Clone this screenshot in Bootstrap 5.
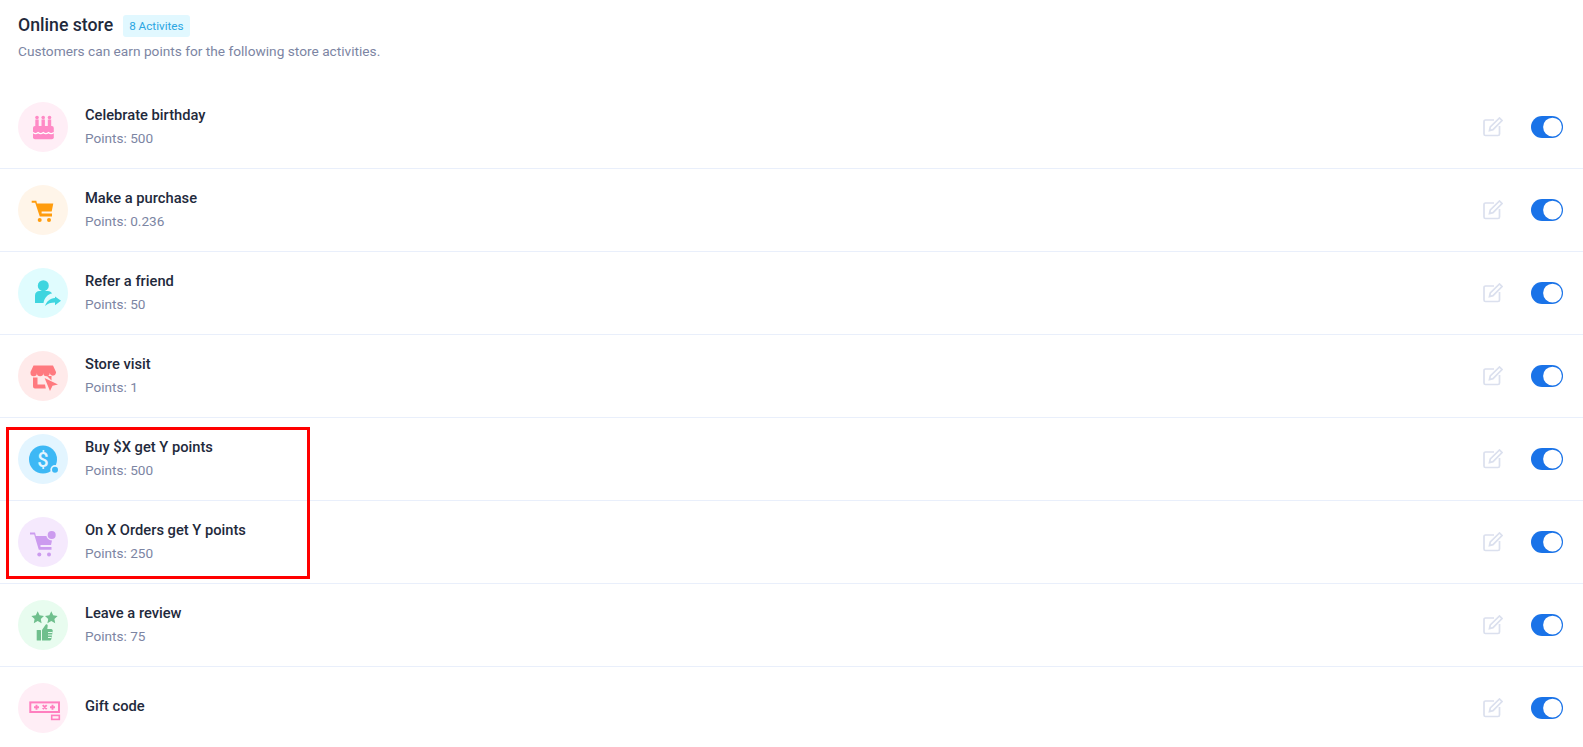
<!DOCTYPE html>
<html lang="en">
<head>
    <meta charset="UTF-8">
    <meta name="viewport" content="width=device-width, initial-scale=1.0">
    <title>Online store activities</title>
    <link href="https://cdn.jsdelivr.net/npm/bootstrap@5.3.0/dist/css/bootstrap.min.css" rel="stylesheet">
    <style>
        body {
            font-family: Roboto, "Liberation Sans", sans-serif;
            background: #fff;
            color: #1f2a3c;
        }
        .store-head {
            padding: 13px 20px 0 18px;
            height: 86px;
        }
        .store-title {
            font-size: 17.7px;
            font-weight: 500;
            line-height: 24px;
            margin: 0;
        }
        .count-tag {
            background: #e1f8ff;
            color: #2ba6e2;
            font-size: 11.7px;
            line-height: 22px;
            padding: 0 6px;
            border-radius: 3px;
            margin-left: 10px;
            margin-top: 2px;
        }
        .store-sub {
            font-size: 13.7px;
            line-height: 20px;
            color: #7c85a3;
            margin: 4px 0 0;
        }
        .activity-row {
            padding: 16px 20px 16px 18px;
            border-bottom: 1px solid #e9effb;
        }
        .activity-row:last-child {
            border-bottom: 0;
            padding-bottom: 0;
        }
        .icon-disc {
            width: 50px;
            height: 50px;
            flex: none;
            margin-right: 17px;
        }
        .icon-disc svg {
            width: 32px;
            height: 32px;
            overflow: visible;
        }
        .disc-pink { background: #ffeef6; }
        .disc-orange { background: #fff5e9; }
        .disc-cyan { background: #e0fcfe; }
        .disc-red { background: #ffeaea; }
        .disc-blue { background: #e3f5ff; }
        .disc-purple { background: #f5e9fd; }
        .disc-green { background: #e8fcef; }
        .activity-name {
            font-size: 14.7px;
            font-weight: 500;
            line-height: 20px;
            margin: 0;
        }
        .activity-name.name-only {
            padding-bottom: 4px;
        }
        .activity-points {
            font-size: 13.6px;
            line-height: 20px;
            color: #7c85a3;
            margin: 3px 0 1px;
        }
        .edit-icon {
            width: 20px;
            height: 20px;
            margin-right: 28px;
        }
        .form-switch.switch-box {
            padding: 0;
            margin: 0;
            min-height: 0;
            line-height: 0;
        }
        .form-switch.switch-box .form-check-input {
            float: none;
            width: 32px;
            height: 22px;
            margin: 0;
            border: 0;
            background-color: #1a73e8;
            background-size: 25px 25px;
            background-position: right -2px center;
        }
        .marked-rows {
            position: relative;
        }
        .marked-frame {
            position: absolute;
            left: 6px;
            top: 9px;
            width: 304px;
            height: 152px;
            border: 3px solid #f00;
            pointer-events: none;
        }
    </style>
</head>
<body>
    <svg class="d-none">
        <symbol id="edit-glyph" viewBox="0 0 20 20"><path d="M11 3H2.500A1.500 1.500 0 0 0 1 4.500V17a1.500 1.500 0 0 0 1.500 1.500H15a1.500 1.500 0 0 0 1.500-1.500V9" fill="none" stroke="#dbe0ee" stroke-width="1.700"/><path d="M6.500 13.500l.8-3.500L16.500 1l2.500 2.500-9 9.200z" fill="none" stroke="#dbe0ee" stroke-width="1.700"/></symbol>
    </svg>

    <div class="store-head">
        <div class="d-flex align-items-center">
            <h1 class="store-title">Online store</h1>
            <span class="count-tag">8 Activites</span>
        </div>
        <p class="store-sub">Customers can earn points for the following store activities.</p>
    </div>

    <div class="activity-row d-flex align-items-center">
        <div class="icon-disc disc-pink rounded-circle d-flex align-items-center justify-content-center">
            <svg viewBox="0 0 32 32" fill="#ff8ac6">
                <circle cx="10" cy="6.600" r="1.800"/><circle cx="16.200" cy="6.600" r="1.800"/><circle cx="22.500" cy="6.600" r="1.800"/>
                <rect x="8.300" y="8.500" width="3.400" height="7"/><rect x="14.500" y="8.500" width="3.400" height="7"/><rect x="20.800" y="8.500" width="3.400" height="7"/>
                <path d="M8 15h16.800a2 2 0 0 1 2 2v9.300a2 2 0 0 1-2 2H8a2 2 0 0 1-2-2V17a2 2 0 0 1 2-2z"/>
                <path d="M6 21.500c1.700 1.600 3.400 1.600 5.100 0 1.700 1.600 3.400 1.600 5.200 0 1.700 1.600 3.400 1.600 5.200 0 1.700 1.600 3.400 1.600 5.300 0" fill="none" stroke="#fff" stroke-width="1.200"/>
            </svg>
        </div>
        <div class="flex-grow-1">
            <p class="activity-name">Celebrate birthday</p>
            <p class="activity-points">Points: 500</p>
        </div>
        <svg class="edit-icon"><use href="#edit-glyph"/></svg>
        <div class="form-check form-switch switch-box"><input class="form-check-input" type="checkbox" role="switch" checked></div>
    </div>

    <div class="activity-row d-flex align-items-center">
        <div class="icon-disc disc-orange rounded-circle d-flex align-items-center justify-content-center">
            <svg viewBox="0 0 32 32" fill="#ff9c0d">
                <path d="M4.700 6.700h4.600l.7 2.900h16.300l-1.600 8H14.600v1.800H25v3H12.800L8.200 8.700H4.700z"/>
                <circle cx="12.700" cy="26" r="2"/><circle cx="22" cy="26" r="2"/>
            </svg>
        </div>
        <div class="flex-grow-1">
            <p class="activity-name">Make a purchase</p>
            <p class="activity-points">Points: 0.236</p>
        </div>
        <svg class="edit-icon"><use href="#edit-glyph"/></svg>
        <div class="form-check form-switch switch-box"><input class="form-check-input" type="checkbox" role="switch" checked></div>
    </div>

    <div class="activity-row d-flex align-items-center">
        <div class="icon-disc disc-cyan rounded-circle d-flex align-items-center justify-content-center">
            <svg viewBox="0 0 32 32" fill="#3fd5df">
                <circle cx="16.300" cy="8.700" r="5.500"/>
                <path d="M8 26v-7.500c0-3 2-4.500 4.500-4.500h8c2.500 0 3.800 1 4.500 2.500-4 .5-7.500 4-8.500 9.500z"/>
                <path d="M18 29c1.500-4.500 5-7.500 10-8v-1.600l6 4.300-6 4.500v-2.700c-4 0-7.500 1-10 3.500z"/>
            </svg>
        </div>
        <div class="flex-grow-1">
            <p class="activity-name">Refer a friend</p>
            <p class="activity-points">Points: 50</p>
        </div>
        <svg class="edit-icon"><use href="#edit-glyph"/></svg>
        <div class="form-check form-switch switch-box"><input class="form-check-input" type="checkbox" role="switch" checked></div>
    </div>

    <div class="activity-row d-flex align-items-center">
        <div class="icon-disc disc-red rounded-circle d-flex align-items-center justify-content-center">
            <svg viewBox="0 0 32 32" fill="#ff7a7f">
                <path d="M6.500 5.600h19.500l3 6.500v1a3.200 3.200 0 0 1-6.300 0 3.200 3.200 0 0 1-6.400 0 3.200 3.200 0 0 1-6.400 0 3.200 3.200 0 0 1-6.400 0v-1z"/>
                <path d="M6 17.500h4.500v7H18l.8 4H8a2 2 0 0 1-2-2z"/>
                <path d="M20 16h4.500v4.500z"/>
                <path d="M17.600 18l13.400 6.400-5.500 1.300-2.500 5.300z"/>
            </svg>
        </div>
        <div class="flex-grow-1">
            <p class="activity-name">Store visit</p>
            <p class="activity-points">Points: 1</p>
        </div>
        <svg class="edit-icon"><use href="#edit-glyph"/></svg>
        <div class="form-check form-switch switch-box"><input class="form-check-input" type="checkbox" role="switch" checked></div>
    </div>

    <div class="marked-rows">
        <div class="activity-row d-flex align-items-center">
            <div class="icon-disc disc-blue rounded-circle d-flex align-items-center justify-content-center">
                <svg viewBox="0 0 32 32">
                    <circle cx="16" cy="16.500" r="14" fill="#3db8f5"/>
                    <text x="16" y="23.500" text-anchor="middle" font-family="Roboto, sans-serif" font-size="20" font-weight="500" fill="#e3f5ff">$</text>
                    <circle cx="28" cy="26.700" r="4.700" fill="#e3f5ff"/>
                    <circle cx="28" cy="26.700" r="3" fill="#3db8f5"/>
                </svg>
            </div>
            <div class="flex-grow-1">
                <p class="activity-name">Buy $X get Y points</p>
                <p class="activity-points">Points: 500</p>
            </div>
            <svg class="edit-icon"><use href="#edit-glyph"/></svg>
            <div class="form-check form-switch switch-box"><input class="form-check-input" type="checkbox" role="switch" checked></div>
        </div>

        <div class="activity-row d-flex align-items-center">
            <div class="icon-disc disc-purple rounded-circle d-flex align-items-center justify-content-center">
                <svg viewBox="0 0 32 32" fill="#cc9bef">
                    <path d="M3 6.400h5l.9 3.600H26l-2 9H13.500v2h11v2.700H11.800L7.200 8.400H3z"/>
                    <circle cx="12.300" cy="28.400" r="2"/><circle cx="22" cy="28.400" r="2"/>
                    <circle cx="24.700" cy="9" r="5.400" fill="#f5e9fd"/>
                    <circle cx="24.700" cy="9" r="4"/>
                </svg>
            </div>
            <div class="flex-grow-1">
                <p class="activity-name">On X Orders get Y points</p>
                <p class="activity-points">Points: 250</p>
            </div>
            <svg class="edit-icon"><use href="#edit-glyph"/></svg>
            <div class="form-check form-switch switch-box"><input class="form-check-input" type="checkbox" role="switch" checked></div>
        </div>
        <div class="marked-frame"></div>
    </div>

    <div class="activity-row d-flex align-items-center">
        <div class="icon-disc disc-green rounded-circle d-flex align-items-center justify-content-center">
            <svg viewBox="0 0 32 32" fill="#6fbf8d">
                <path d="M10.700 2.300l1.900 4 4.400.6-3.200 3 .8 4.400-3.900-2.200-3.900 2.200.8-4.400-3.200-3 4.400-.6z"/>
                <path d="M24.300 2.300l1.900 4 4.400.6-3.200 3 .8 4.400-3.900-2.200-3.900 2.200.8-4.400-3.200-3 4.400-.6z"/>
                <rect x="9.700" y="21" width="4.300" height="10.500" rx=".6"/>
                <path d="M15 21l3.400-5c.8-1.200 2.400-.6 2.300.8l-.4 3.200h3.800c1.200 0 1.800 1 1.600 2l-1.300 8c-.2.900-.9 1.500-1.800 1.500H15z"/>
                <path d="M21 23.500h4.500M21 26h4M21 28.500h3.500" stroke="#e8fcef" stroke-width="1" fill="none"/>
            </svg>
        </div>
        <div class="flex-grow-1">
            <p class="activity-name">Leave a review</p>
            <p class="activity-points">Points: 75</p>
        </div>
        <svg class="edit-icon"><use href="#edit-glyph"/></svg>
        <div class="form-check form-switch switch-box"><input class="form-check-input" type="checkbox" role="switch" checked></div>
    </div>

    <div class="activity-row d-flex align-items-center">
        <div class="icon-disc disc-pink rounded-circle d-flex align-items-center justify-content-center">
            <svg viewBox="0 0 32 32" fill="none" stroke="#ff7fbf">
                <rect x="3.300" y="10.400" width="28.700" height="9.600" stroke-width="2"/>
                <path d="M7 15.200h5M9.500 12.700v5M15.700 13.200l4 4M19.700 13.200l-4 4M23 15.200h5M25.500 12.700v5" stroke-width="1.900"/>
                <rect x="24.700" y="23.400" width="7.600" height="4" stroke-width="1.600"/>
            </svg>
        </div>
        <div class="flex-grow-1">
            <p class="activity-name name-only">Gift code</p>
        </div>
        <svg class="edit-icon"><use href="#edit-glyph"/></svg>
        <div class="form-check form-switch switch-box"><input class="form-check-input" type="checkbox" role="switch" checked></div>
    </div>

    <script src="https://cdn.jsdelivr.net/npm/bootstrap@5.3.0/dist/js/bootstrap.bundle.min.js"></script>
</body>
</html>
